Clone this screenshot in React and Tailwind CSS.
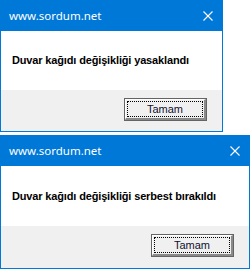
import React from "react";

function CloseX() {
  return (
    <svg width="10" height="10" viewBox="0 0 10 10" className="block">
      <path d="M0.5 0.5 L9.5 9.5 M9.5 0.5 L0.5 9.5" stroke="#ffffff" strokeWidth="1.1" fill="none" />
    </svg>
  );
}

function Dialog({ width, bodyH, message }) {
  return (
    <div className={`flex flex-col border border-[#0078d7] ${width}`}>
      <div className="flex h-[30px] items-center justify-between bg-[#0078d7] pl-[8px] pr-[9px]">
        <span className="text-[11.5px] leading-none text-white" style={{ fontFamily: '"Segoe UI", "Noto Sans", sans-serif' }}>
          www.sordum.net
        </span>
        <CloseX />
      </div>
      <div className={`flex items-center bg-white pl-[11px] ${bodyH}`}>
        <span className="text-[11px] font-bold leading-none tracking-[-0.15px] text-black" style={{ fontFamily: '"Liberation Sans", Arial, sans-serif' }}>
          {message}
        </span>
      </div>
      <div className="flex flex-1 items-start justify-end bg-[#f0f0f0] pr-[15px] pt-[8px]">
        <div className="h-[23px] w-[83px] border border-[#646464]">
          <div className="flex h-full w-full items-center justify-center border-t border-l border-white border-r-2 border-b-2 border-r-[#8a8a8a] border-b-[#8a8a8a] bg-[#f0f0f0] p-[1px]">
            <div className="flex h-full w-full items-center justify-center border border-dotted border-black">
              <span className="text-[11px] leading-none text-[#101030]" style={{ fontFamily: '"Liberation Sans", Arial, sans-serif' }}>
                Tamam
              </span>
            </div>
          </div>
        </div>
      </div>
    </div>
  );
}

export default function App() {
  return (
    <div className="flex h-[269px] w-[250px] flex-col gap-[3px] overflow-hidden bg-white">
      <div className="h-[132px]">
        <Dialog width="w-[223px] h-[132px]" bodyH="h-[59px]" message="Duvar kağıdı değişikliği yasaklandı" />
      </div>
      <div className="h-[134px]">
        <Dialog width="w-[250px] h-[134px]" bodyH="h-[60px]" message="Duvar kağıdı değişikliği serbest bırakıldı" />
      </div>
    </div>
  );
}
